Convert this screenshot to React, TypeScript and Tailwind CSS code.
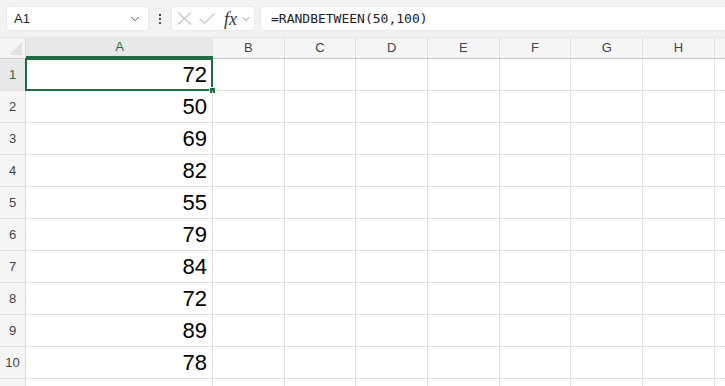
import React from "react";
import { ChevronDown, EllipsisVertical } from "lucide-react";

const cols = ["B", "C", "D", "E", "F", "G", "H"];
const values = [72, 50, 69, 82, 55, 79, 84, 72, 89, 78];

export default function App() {
  return (
    <div
      className="w-[725px] h-[386px] overflow-hidden bg-white flex flex-col"
      style={{ fontFamily: '"Liberation Sans", Arial, sans-serif' }}
    >
      {/* toolbar */}
      <div className="h-[38px] shrink-0 bg-[#f2f2f2] border-b border-[#e6e6e6] flex items-start pt-[6px] pl-[6px]">
        <div className="w-[143px] h-[25px] bg-white rounded-[4px] border border-[#e9e9e9] flex items-center pl-[7px] pr-[6px] shrink-0">
          <span className="text-[13px] text-[#222] flex-1">A1</span>
          <ChevronDown size={14} strokeWidth={1.6} className="text-[#444]" />
        </div>
        <div className="w-[22px] h-[25px] flex items-center justify-center shrink-0">
          <EllipsisVertical size={14} strokeWidth={2} className="text-[#444]" />
        </div>
        <div className="w-[84px] h-[25px] bg-white rounded-[4px] border border-[#e9e9e9] flex items-center pl-[5px] shrink-0">
          <svg width="15" height="13" viewBox="0 0 15 13" fill="none" stroke="#c4c4c4" strokeWidth="1.1">
            <path d="M1 0.5 L14 12.5 M14 0.5 L1 12.5" />
          </svg>
          <svg width="16" height="11" viewBox="0 0 16 11" fill="none" stroke="#c4c4c4" strokeWidth="1.1" className="ml-[7px]">
            <path d="M0.5 5.5 L5.5 10.5 L15.5 0.5" />
          </svg>
          <span
            className="ml-[9px] text-[18px] italic text-[#333] leading-none"
            style={{ fontFamily: '"Liberation Serif", serif' }}
          >
            fx
          </span>
          <ChevronDown size={12} strokeWidth={1.6} className="text-[#777] ml-[3px]" />
        </div>
        <div className="ml-[5px] w-[480px] h-[25px] bg-white rounded-[4px] border border-[#e9e9e9] flex items-center pl-[10px] shrink-0">
          <span
            className="text-[13px] text-[#222]"
            style={{ fontFamily: '"DejaVu Sans Mono", "Liberation Mono", monospace' }}
          >
            =RANDBETWEEN(50,100)
          </span>
        </div>
      </div>

      {/* header row */}
      <div className="h-[21px] shrink-0 flex bg-[#f5f5f5] border-b border-[#c8c8c8]">
        <div className="w-[26px] shrink-0 relative border-r border-[#dcdcdc]">
          <div className="absolute right-[3px] bottom-[3px] w-0 h-0 border-l-[13px] border-l-transparent border-b-[13px] border-b-[#e2e2e2]" />
        </div>
        <div className="w-[187px] shrink-0 bg-[#e8e8e8] flex items-center justify-center text-[13px] text-[#1e6b41] border-b-2 border-[#1e6b41]">
          A
        </div>
        {cols.map((c) => (
          <div
            key={c}
            className="w-[71.7px] shrink-0 flex items-center justify-center text-[13px] text-[#444] border-r border-[#e0e0e0]"
          >
            {c}
          </div>
        ))}
        <div className="flex-1" />
      </div>

      {/* rows */}
      <div className="flex flex-col">
        {[...values, null].map((v, i) => (
          <div key={i} className="h-[32px] shrink-0 flex border-b border-[#e1e1e1]">
            <div
              className={
                "w-[26px] shrink-0 flex items-center justify-center text-[13px] border-r " +
                (i === 0
                  ? "bg-[#e8e8e8] text-[#1e6b41] border-[#1e6b41]"
                  : "bg-[#f5f5f5] text-[#444] border-[#d4d4d4]")
              }
            >
              {i + 1}
            </div>
            <div className="w-[187px] shrink-0 relative flex items-center justify-end pr-[5px] border-r border-[#e1e1e1] text-[22px] text-black">
              {v}
              {i === 0 && (
                <div className="absolute left-[-1px] top-[-1px] right-[-1px] bottom-[-1px] border-2 border-[#1e6b41]">
                  <div className="absolute right-[-5px] bottom-[-5px] w-[7px] h-[7px] bg-[#1e6b41] border border-white" />
                </div>
              )}
            </div>
            {cols.map((c) => (
              <div key={c} className="w-[71.7px] shrink-0 border-r border-[#e1e1e1]" />
            ))}
          </div>
        ))}
      </div>
    </div>
  );
}
